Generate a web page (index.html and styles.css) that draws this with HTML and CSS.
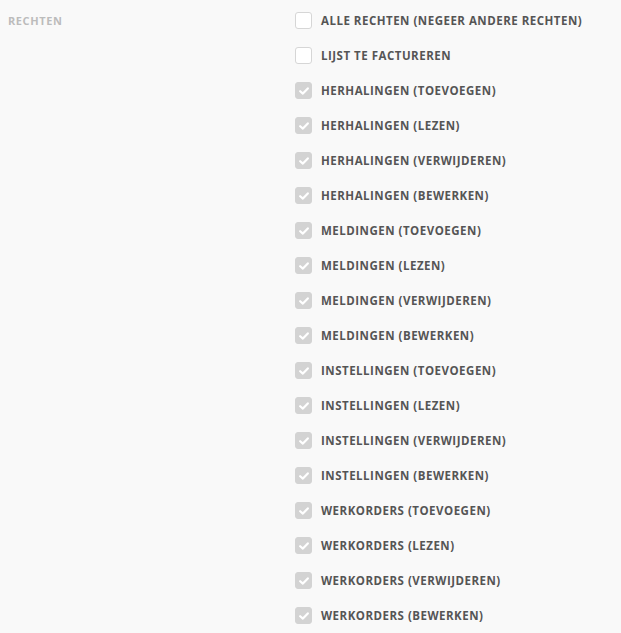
FILE: index.html
```html
<!DOCTYPE html>
<html>
<head>
<meta charset="utf-8">
<link rel="stylesheet" href="styles.css">
</head>
<body>
<div class="row-group">
  <div class="group-label">RECHTEN</div>
  <div class="options">
    <label class="opt"><span class="box"></span><span class="txt">ALLE RECHTEN (NEGEER ANDERE RECHTEN)</span></label>
    <label class="opt"><span class="box"></span><span class="txt">LIJST TE FACTUREREN</span></label>
    <label class="opt"><span class="box checked"><svg viewBox="0 0 10 8" width="10" height="8"><path d="M1.2 4.2 L3.9 6.6 L8.8 1.4" fill="none" stroke="#fff" stroke-width="2.2" stroke-linecap="round" stroke-linejoin="round"/></svg></span><span class="txt">HERHALINGEN (TOEVOEGEN)</span></label>
    <label class="opt"><span class="box checked"><svg viewBox="0 0 10 8" width="10" height="8"><path d="M1.2 4.2 L3.9 6.6 L8.8 1.4" fill="none" stroke="#fff" stroke-width="2.2" stroke-linecap="round" stroke-linejoin="round"/></svg></span><span class="txt">HERHALINGEN (LEZEN)</span></label>
    <label class="opt"><span class="box checked"><svg viewBox="0 0 10 8" width="10" height="8"><path d="M1.2 4.2 L3.9 6.6 L8.8 1.4" fill="none" stroke="#fff" stroke-width="2.2" stroke-linecap="round" stroke-linejoin="round"/></svg></span><span class="txt">HERHALINGEN (VERWIJDEREN)</span></label>
    <label class="opt"><span class="box checked"><svg viewBox="0 0 10 8" width="10" height="8"><path d="M1.2 4.2 L3.9 6.6 L8.8 1.4" fill="none" stroke="#fff" stroke-width="2.2" stroke-linecap="round" stroke-linejoin="round"/></svg></span><span class="txt">HERHALINGEN (BEWERKEN)</span></label>
    <label class="opt"><span class="box checked"><svg viewBox="0 0 10 8" width="10" height="8"><path d="M1.2 4.2 L3.9 6.6 L8.8 1.4" fill="none" stroke="#fff" stroke-width="2.2" stroke-linecap="round" stroke-linejoin="round"/></svg></span><span class="txt">MELDINGEN (TOEVOEGEN)</span></label>
    <label class="opt"><span class="box checked"><svg viewBox="0 0 10 8" width="10" height="8"><path d="M1.2 4.2 L3.9 6.6 L8.8 1.4" fill="none" stroke="#fff" stroke-width="2.2" stroke-linecap="round" stroke-linejoin="round"/></svg></span><span class="txt">MELDINGEN (LEZEN)</span></label>
    <label class="opt"><span class="box checked"><svg viewBox="0 0 10 8" width="10" height="8"><path d="M1.2 4.2 L3.9 6.6 L8.8 1.4" fill="none" stroke="#fff" stroke-width="2.2" stroke-linecap="round" stroke-linejoin="round"/></svg></span><span class="txt">MELDINGEN (VERWIJDEREN)</span></label>
    <label class="opt"><span class="box checked"><svg viewBox="0 0 10 8" width="10" height="8"><path d="M1.2 4.2 L3.9 6.6 L8.8 1.4" fill="none" stroke="#fff" stroke-width="2.2" stroke-linecap="round" stroke-linejoin="round"/></svg></span><span class="txt">MELDINGEN (BEWERKEN)</span></label>
    <label class="opt"><span class="box checked"><svg viewBox="0 0 10 8" width="10" height="8"><path d="M1.2 4.2 L3.9 6.6 L8.8 1.4" fill="none" stroke="#fff" stroke-width="2.2" stroke-linecap="round" stroke-linejoin="round"/></svg></span><span class="txt">INSTELLINGEN (TOEVOEGEN)</span></label>
    <label class="opt"><span class="box checked"><svg viewBox="0 0 10 8" width="10" height="8"><path d="M1.2 4.2 L3.9 6.6 L8.8 1.4" fill="none" stroke="#fff" stroke-width="2.2" stroke-linecap="round" stroke-linejoin="round"/></svg></span><span class="txt">INSTELLINGEN (LEZEN)</span></label>
    <label class="opt"><span class="box checked"><svg viewBox="0 0 10 8" width="10" height="8"><path d="M1.2 4.2 L3.9 6.6 L8.8 1.4" fill="none" stroke="#fff" stroke-width="2.2" stroke-linecap="round" stroke-linejoin="round"/></svg></span><span class="txt">INSTELLINGEN (VERWIJDEREN)</span></label>
    <label class="opt"><span class="box checked"><svg viewBox="0 0 10 8" width="10" height="8"><path d="M1.2 4.2 L3.9 6.6 L8.8 1.4" fill="none" stroke="#fff" stroke-width="2.2" stroke-linecap="round" stroke-linejoin="round"/></svg></span><span class="txt">INSTELLINGEN (BEWERKEN)</span></label>
    <label class="opt"><span class="box checked"><svg viewBox="0 0 10 8" width="10" height="8"><path d="M1.2 4.2 L3.9 6.6 L8.8 1.4" fill="none" stroke="#fff" stroke-width="2.2" stroke-linecap="round" stroke-linejoin="round"/></svg></span><span class="txt">WERKORDERS (TOEVOEGEN)</span></label>
    <label class="opt"><span class="box checked"><svg viewBox="0 0 10 8" width="10" height="8"><path d="M1.2 4.2 L3.9 6.6 L8.8 1.4" fill="none" stroke="#fff" stroke-width="2.2" stroke-linecap="round" stroke-linejoin="round"/></svg></span><span class="txt">WERKORDERS (LEZEN)</span></label>
    <label class="opt"><span class="box checked"><svg viewBox="0 0 10 8" width="10" height="8"><path d="M1.2 4.2 L3.9 6.6 L8.8 1.4" fill="none" stroke="#fff" stroke-width="2.2" stroke-linecap="round" stroke-linejoin="round"/></svg></span><span class="txt">WERKORDERS (VERWIJDEREN)</span></label>
    <label class="opt"><span class="box checked"><svg viewBox="0 0 10 8" width="10" height="8"><path d="M1.2 4.2 L3.9 6.6 L8.8 1.4" fill="none" stroke="#fff" stroke-width="2.2" stroke-linecap="round" stroke-linejoin="round"/></svg></span><span class="txt">WERKORDERS (BEWERKEN)</span></label>
  </div>
</div>
</body>
</html>
```
FILE: styles.css
```css
html, body {
  margin: 0;
  padding: 0;
  background: #f9f9f9;
}
body {
  font-family: "Open Sans", "DejaVu Sans", sans-serif;
  height: 633px;
  overflow: hidden;
}
.row-group {
  display: flex;
  padding: 3px 0 0 8px;
}
.group-label {
  width: 287px;
  font-size: 11px;
  font-weight: 700;
  color: #bcbcbc;
  letter-spacing: 0.6px;
  line-height: 35px;
  height: 35px;
}
.options {
  display: flex;
  flex-direction: column;
}
.opt {
  display: flex;
  align-items: center;
  height: 35px;
}
.box {
  width: 15px;
  height: 15px;
  border: 1px solid #d6d6d6;
  border-radius: 3px;
  background: #fff;
  display: flex;
  align-items: center;
  justify-content: center;
  flex-shrink: 0;
}
.box.checked {
  background: #d3d3d3;
  border-color: #d3d3d3;
}
.txt {
  margin-left: 9px;
  font-size: 11.5px;
  font-weight: 700;
  color: #555;
  letter-spacing: 0.5px;
}
```
